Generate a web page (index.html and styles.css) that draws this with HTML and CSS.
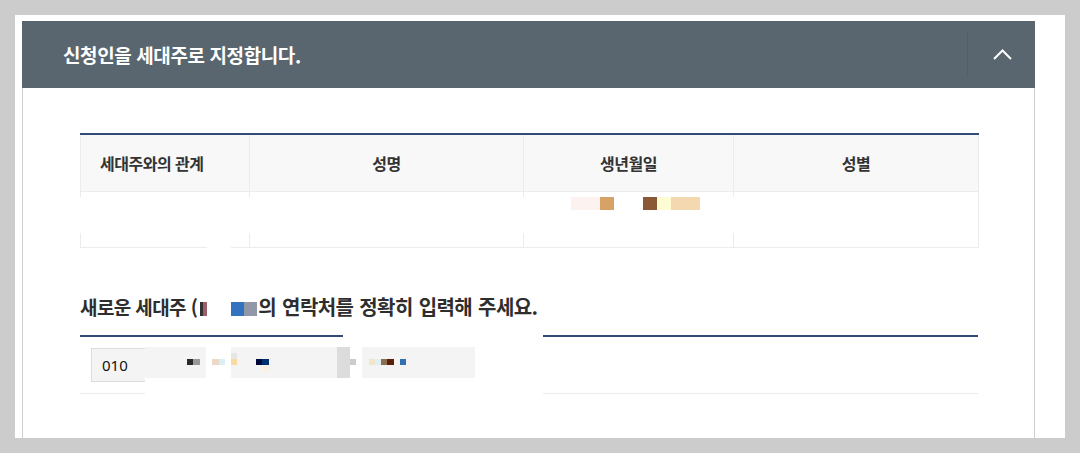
FILE: index.html
```html
<!DOCTYPE html>
<html lang="ko">
<head>
<meta charset="utf-8">
<title>세대주 지정</title>
<link rel="stylesheet" href="styles.css">
</head>
<body>
<div class="page">
  <section class="panel">
    <div class="panel-head">
      <h2 class="panel-title">신청인을 세대주로 지정합니다.</h2>
      <button class="toggle" type="button" aria-label="접기">
        <svg width="19" height="11" viewBox="0 0 19 11"><polyline points="1,10 9.5,1.5 18,10" fill="none" stroke="#fff" stroke-width="2"/></svg>
      </button>
    </div>
    <div class="panel-body">
      <table class="hh-table">
        <colgroup>
          <col class="c1"><col class="c2"><col class="c3"><col class="c4">
        </colgroup>
        <thead>
          <tr><th class="th-first">세대주와의 관계</th><th>성명</th><th>생년월일</th><th>성별</th></tr>
        </thead>
        <tbody>
          <tr><td></td><td></td><td></td><td></td></tr>
        </tbody>
      </table>

      <h3 class="sub-title">새로운 세대주 (<span class="name-mask"><i class="m m-dark"></i><i class="m m-mauve"></i><i class="m m-gap"></i><i class="m m-blue"></i><i class="m m-gray"></i></span><span class="sub-rest">의 연락처를 정확히 입력해 주세요.</span></h3>

      <div class="phone-row">
        <span class="phone-first">010</span>
      </div>

      <div class="mask mask-row">
        <i class="px r1"></i><i class="px r2"></i><i class="px r3"></i><i class="px r4"></i><i class="px r5"></i>
      </div>
      <div class="mask mask-row-bottom"></div>
      <div class="mask mask-line"></div>
      <div class="mask mask-phone">
        <span class="blk blk-a"></span>
        <span class="blk blk-b"></span>
        <span class="blk blk-b2"></span>
        <span class="blk blk-c"></span>
        <i class="px q1"></i><i class="px q2"></i><i class="px q3"></i><i class="px q4"></i>
        <i class="px q5"></i><i class="px q6"></i><i class="px q7"></i><i class="px q8"></i>
        <i class="px q9"></i><i class="px q10"></i><i class="px q11"></i><i class="px q12"></i>
        <i class="px q13"></i><i class="px q14"></i><i class="px q15"></i>
      </div>
    </div>
  </section>
</div>
</body>
</html>
```

FILE: styles.css
```css
* { box-sizing: border-box; }

body {
  margin: 0;
  background: #cccccc;
  font-family: "Noto Sans CJK KR", "Noto Sans", sans-serif;
  color: #333;
}

.page {
  margin: 15px 15px 0;
  height: 423px;
  background: #fff;
  padding: 6px 30px 0 7px;
}

.panel-head {
  display: flex;
  align-items: center;
  height: 67px;
  background: #59666f;
}

.panel-title {
  flex: 1;
  margin: 0;
  padding-left: 41px;
  color: #fff;
  font-size: 19px;
  font-weight: 700;
  letter-spacing: -0.4px;
  line-height: 26px;
}

.toggle {
  width: 68px;
  height: 45px;
  padding: 0;
  border: 0;
  border-left: 1px solid #4b5f84;
  background: transparent;
  display: flex;
  align-items: center;
  justify-content: center;
}

.toggle svg { display: block; margin-top: -1px; margin-left: 2px; }

.panel-body {
  position: relative;
  height: 351px;
  padding: 45px 56px 0 57px;
  border: 1px solid #cfcfcf;
  border-top: 0;
  border-bottom-color: #ababab;
}

.hh-table {
  width: 100%;
  border-collapse: collapse;
  table-layout: fixed;
  border-top: 2px solid #344b78;
}

.c1 { width: 169px; }
.c2 { width: 274px; }
.c3 { width: 210px; }
.c4 { width: 245px; }

.hh-table th {
  height: 57px;
  padding: 0;
  background: #f8f8f8;
  border: 1px solid #ececec;
  border-top: 0;
  font-size: 16px;
  font-weight: 700;
  letter-spacing: -0.5px;
  color: #333;
  text-align: center;
}

.hh-table th.th-first {
  text-align: left;
  padding-left: 19px;
}

.hh-table td {
  height: 56px;
  padding: 0;
  border: 1px solid #ececec;
}

.sub-title {
  margin: 45px 0 0;
  padding-bottom: 14px;
  border-bottom: 2px solid #344b78;
  font-size: 19px;
  line-height: 28px;
  font-weight: 700;
  letter-spacing: -0.6px;
  color: #2e2e2e;
}

.sub-rest { font-size: 20px; word-spacing: 1px; }

.name-mask {
  display: inline-flex;
  width: 61px;
  height: 14px;
  vertical-align: -1px;
}

.m { display: block; height: 14px; }
.m-dark { width: 3px; margin-left: 3px; background: #323232; }
.m-mauve { width: 4px; background: #9a5f6b; }
.m-gap { width: 24px; }
.m-blue { width: 13px; background: #3272bf; }
.m-gray { width: 13px; background: #9197a6; }

.phone-row {
  height: 57px;
  padding: 11px 0 0 11px;
  border-bottom: 1px solid #ececec;
}

.phone-first {
  display: inline-block;
  width: 80px;
  height: 34px;
  padding-left: 10px;
  border: 1px solid #dcdcdc;
  background: #f4f4f4;
  font-family: "Noto Sans", sans-serif;
  font-size: 15px;
  line-height: 32px;
  color: #111;
}

/* redaction overlays */
.mask { position: absolute; background: #fff; }
.px { position: absolute; display: block; }

.mask-row { left: 55px; top: 109px; width: 662px; height: 36px; }
.r1 { left: 493px; top: 0; width: 29px; height: 13px; background: #fcf2ef; }
.r2 { left: 522px; top: 0; width: 14px; height: 13px; background: #d6a266; }
.r3 { left: 565px; top: 0; width: 14px; height: 13px; background: #8a5834; }
.r4 { left: 579px; top: 0; width: 14px; height: 13px; background: #fffbd3; }
.r5 { left: 593px; top: 0; width: 29px; height: 13px; background: #f4d8b0; }

.mask-row-bottom { left: 184px; top: 144px; width: 24px; height: 18px; }

.mask-line { left: 320px; top: 240px; width: 200px; height: 10px; }

.mask-phone { left: 122px; top: 249px; width: 398px; height: 104px; }

.blk { position: absolute; top: 10px; height: 31px; background: #f4f4f4; }
.blk-a { left: 0; width: 61px; }
.blk-b { left: 86px; width: 106px; }
.blk-b2 { left: 192px; width: 13px; background: #dcdcdc; }
.blk-c { left: 217px; width: 113px; }

.q1 { left: 42px; top: 22px; width: 6px; height: 6px; background: #2a2a2a; }
.q2 { left: 48px; top: 22px; width: 7px; height: 6px; background: #999; }
.q3 { left: 67px; top: 22px; width: 7px; height: 6px; background: #ebd8c8; }
.q4 { left: 74px; top: 22px; width: 6px; height: 6px; background: #d9f0f5; }
.q5 { left: 86px; top: 16px; width: 6px; height: 6px; background: #e6e6e6; }
.q6 { left: 86px; top: 22px; width: 6px; height: 6px; background: #f9dba0; }
.q7 { left: 111px; top: 22px; width: 6px; height: 6px; background: #000a3a; }
.q8 { left: 117px; top: 22px; width: 7px; height: 6px; background: #003070; }
.q9 { left: 117px; top: 28px; width: 7px; height: 6px; background: #faf0e4; }
.q10 { left: 205px; top: 22px; width: 6px; height: 6px; background: #cccccc; }
.q11 { left: 224px; top: 22px; width: 6px; height: 6px; background: #f1e7c8; }
.q12 { left: 230px; top: 22px; width: 6px; height: 6px; background: #dff0f5; }
.q13 { left: 236px; top: 22px; width: 6px; height: 6px; background: #8a7050; }
.q14 { left: 242px; top: 22px; width: 7px; height: 6px; background: #5a2008; }
.q15 { left: 255px; top: 22px; width: 6px; height: 6px; background: #3270b0; }
```
